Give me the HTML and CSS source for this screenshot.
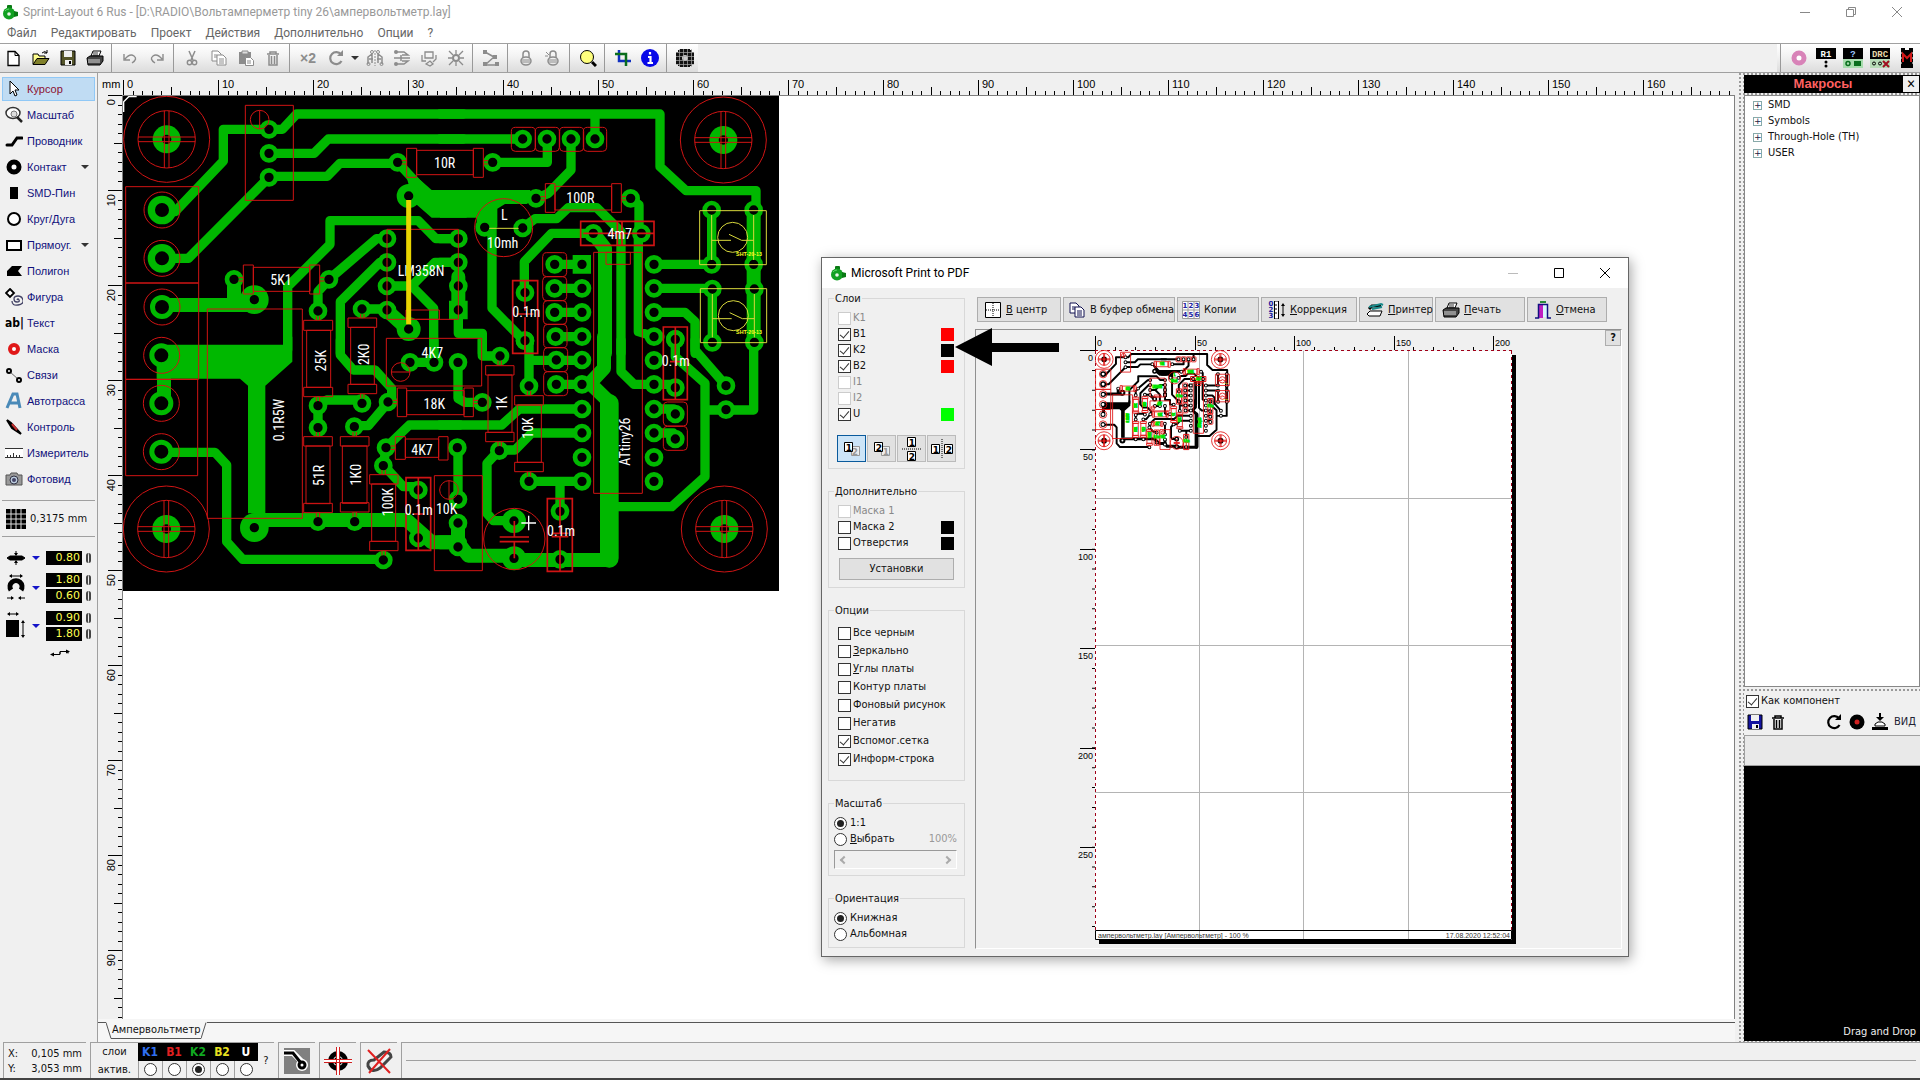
FILE: index.html
```html
<!DOCTYPE html>
<html lang="ru">
<head>
<meta charset="utf-8">
<title>Sprint-Layout 6 Rus</title>
<link rel="stylesheet" href="styles.css">
</head>
<body>

<svg class="defs" width="0" height="0" aria-hidden="true">
  <defs>
    <symbol id="logo" viewBox="0 0 16 16"><rect x="5" y="1" width="5" height="4" rx="1" fill="#0a7a14"/><circle cx="7" cy="9.500" r="6" fill="#12a022"/><path d="M12 7l4 1v4l-4 1z" fill="#0a7a14"/><circle cx="7" cy="10" r="1.800" fill="#eaf6ea"/><path d="M3 7a5 5 0 0 1 4-2" stroke="#5fd86a" fill="none"/></symbol>
    <symbol id="printer" viewBox="0 0 18 18"><path d="M5 7l2-5h8l-2 5z" fill="#fff" stroke="#000"/><path d="M7 4h5M7 6h5" stroke="#000" stroke-width=".8"/><path d="M1 9l3-2h13v5l-3 4H2z" fill="#444" stroke="#000"/><path d="M2 11h12M2 13h12" stroke="#ddd"/></symbol>
    <symbol id="floppy" viewBox="0 0 18 18"><path d="M2 2h14v14H2z" fill="var(--disk,#55552a)" stroke="#000"/><path d="M5 2h8v6H5zM6 11h7v5H6z" fill="#f0f0f0"/><path d="M10 12h2v3h-2z" fill="#000"/></symbol>
    <symbol id="trash" viewBox="0 0 18 18"><path d="M3 5h12M6 5V3h6v2M5 6v10h8V6M7.500 7v8M10.500 7v8" fill="none" stroke="currentColor" stroke-width="1.500"/></symbol>
    <symbol id="pages" viewBox="0 0 18 18"><path d="M2 2h6l3 3v7H2z" fill="#fff" stroke="currentColor"/><path d="M7 6h6l3 3v7H7z" fill="#fff" stroke="currentColor"/><path d="M4 6h3M4 8h3M9 10h5M9 12h5M9 14h5" stroke="currentColor"/></symbol>
    <symbol id="turn" viewBox="0 0 18 18"><path d="M14 5.500A6 6 0 1 0 14.500 12" fill="none" stroke="currentColor" stroke-width="2.200"/><path d="M10 7h6V1z" fill="currentColor"/></symbol>
    <symbol id="lock" viewBox="0 0 18 18"><path d="M6 9V5q0-3 3-3t3 3v4" fill="none" stroke="currentColor" stroke-width="1.500"/><ellipse cx="9" cy="12" rx="5" ry="4" fill="none" stroke="currentColor" stroke-width="1.500"/><path d="M5 11h8M5 13h8" stroke="currentColor"/></symbol>
    <g id="mount"><circle r="42" class="copper"/><circle r="14" class="hole"/><g class="silk"><circle r="129"/><circle r="86"/><path d="M-86 -7H86M-86 7H86M-7 -86V86M7 -86V86"/></g></g>
    <pattern id="ticks-x" x="25" width="95" height="22" patternUnits="userSpaceOnUse"><path d="M.5 7v15M10.500 18v4M19.500 18v4M29.500 18v4M38.500 18v4M48.500 14v8M57.500 18v4M67.500 18v4M76.500 18v4M86.500 18v4" stroke="#000"/></pattern>
    <pattern id="ticks-y" y="0" width="24" height="95" patternUnits="userSpaceOnUse"><path d="M10 .5h14M20 10.500h4M20 19.500h4M20 29.500h4M20 38.500h4M16 48.500h8M20 57.500h4M20 67.500h4M20 76.500h4M20 86.500h4" stroke="#000"/></pattern>

    <g id="board">
      <!-- copper -->
      <g class="track">
        <g transform="translate(360 270)">
          <path d="M165 365L310 213V118H487L530 72H1030M447 190H582L625 147H1030M447 259H622L660 220H833M128 505H205L447 262M503 780V590L630 463V392H895L948 446H1015M627 568L770 446H801M661 790V635L780 517H801M726 657H801M801 588H875L941 655V780M875 588L945 517H1015M594 660V605L627 568M833 217L900 290"/>
          <path class="w42" d="M342 590V640M125 645H403M808 668L860 715"/>
          <path class="copper" d="M850 225L935 300H1040V383H935L880 335Z"/>
          <path class="w56" d="M447 118h0M447 190h0M447 262h0M833 217h0M342 568h0M627 568h0M594 663h0M726 657h0M801 446h0M801 517h0M801 588h0M801 660h0M1015 446h0M1015 517h0M1015 588h0M866 318h0M866 717h0"/>
          <path class="w70" d="M866 318h0M866 717h0M126 651h0"/>
          <path class="w86" d="M403 629h0M126 360h0M126 505h0"/>
        </g>
        <g transform="translate(1320 270)">
          <path d="M0 72H660V230L738 302H948V360M465 72V147M0 147H248M158 217H322V147M393 147V240L325 310L288 325M156 383V655L255 755M248 414L285 386H350L385 353H470L543 425V790M460 430H335L253 515V608M572 325L597 345V430M604 430L595 445V725L642 740M344 523H426M344 595H426M344 667H426M344 740H426M642 523H815M642 595H817M642 667H735L765 695V790M815 360V523M817 597V757M0 446H55M0 517H55M55 660V730H127V790M642 740H660"/>
          <path class="w42" d="M460 430L495 475V790M941 360V757M55 560V660"/>
          <path class="copper" d="M0 300H270L288 325L260 342H195L172 356V412H110V383H0ZM398 495H453V551H398ZM27 632H83V688H27Z"/>
          <path class="w56" d="M248 147h0M321 147h0M393 147h0M465 147h0M158 217h0M288 325h0M572 325h0M134 412h0M248 414h0M460 430h0M604 430h0M255 608h0M255 752h0M344 523h0M344 595h0M344 667h0M347 740h0M426 595h0M426 667h0M426 740h0M642 523h0M642 595h0M642 667h0M642 740h0M706 748h0M815 360h0M941 360h0M815 523h0M941 523h0M817 597h0M943 597h0M817 757h0M943 757h0"/>
        </g>
        <g transform="translate(360 1020)">
          <path d="M661 0V45L700 90H765L815 145V175L745 257H703M870 67H942V0M594 195V263M594 195L620 180H726M798 323L868 255H1020M790 375L850 440H895M798 323L790 377M124 337H285L320 375V605L368 658H790"/>
          <path class="w42" d="M132 46V190M403 540H860L935 607H1020"/>
          <path class="copper" d="M110 14H489V-10H517V65L436 137V520H384V137L360 116H110Z"/>
          <path class="w56" d="M804 186h0M703 260h0M870 67h0M942 67h0M594 197h0M594 263h0M726 190h0M594 545h0M704 545h0M895 450h0M895 594h0M798 323h0M790 377h0M790 660h0"/>
          <path class="w70" d="M124 46h0M124 190h0M124 335h0"/>
          <path class="w86" d="M403 563h0"/>
        </g>
        <g transform="translate(1320 1020)">
          <path d="M127 0V48H180M54 67V175L75 187H127M267 10V138M267 61H426M349 133H426M543 0V95L582 133H706M706 0V50L795 130V410L695 500H530M765 0V30L858 137M795 210H941V0M642 207H700M642 279H700M0 255H185L238 207H426M426 279H275L225 330H178L141 370V520L160 542H222M267 424H426M360 424V512M54 323V478"/>
          <path class="w42" d="M492 -10V85L450 130L507 185V660H222M54 549V621M0 607H54L85 647H222"/>
          <path class="w56" d="M508 190V655M180 48h0M54 67h0M127 187h0M255 2h0M267 138h0M349 60h0M426 60h0M349 133h0M426 133h0M426 207h0M426 279h0M426 352h0M426 424h0M642 61h0M642 133h0M642 207h0M642 279h0M642 352h0M642 424h0M706 -2h0M706 143h0M858 137h0M858 209h0M706 222h0M706 297h0M178 332h0M360 514h0M360 658h0M267 424h0M52 323h0M54 478h0M54 549h0M54 621h0"/>
          <path class="w70" d="M222 543h0M222 655h0"/>
        </g>
      </g>
      <!-- drilled holes -->
      <g class="drill">
        <path transform="translate(360 270)" d="M447 118h0M447 190h0M447 262h0M833 217h0M342 568h0M627 568h0M594 663h0M726 657h0M801 446h0M801 517h0M801 588h0M801 660h0M1015 446h0M1015 517h0M1015 588h0M1015 660h0M866 318h0M866 717h0M403 629h0"/>
        <path transform="translate(1320 270)" d="M248 147h0M321 147h0M393 147h0M465 147h0M158 217h0M288 325h0M572 325h0M134 412h0M248 414h0M460 430h0M604 430h0M255 608h0M255 752h0M344 523h0M344 595h0M344 667h0M347 740h0M426 523h0M426 595h0M426 667h0M426 740h0M642 523h0M642 595h0M642 667h0M642 740h0M706 748h0M815 360h0M941 360h0M815 523h0M941 523h0M817 597h0M943 597h0M817 757h0M943 757h0"/>
        <path transform="translate(360 1020)" d="M804 186h0M703 260h0M870 67h0M942 67h0M594 197h0M594 263h0M726 190h0M594 545h0M704 545h0M895 450h0M895 594h0M798 323h0M790 377h0M790 660h0M403 563h0"/>
        <path transform="translate(1320 1020)" d="M180 48h0M54 67h0M127 187h0M267 138h0M349 60h0M426 60h0M349 133h0M426 133h0M426 207h0M426 279h0M426 352h0M426 424h0M642 61h0M642 133h0M642 207h0M642 279h0M642 352h0M642 424h0M706 143h0M858 137h0M858 209h0M706 222h0M706 297h0M178 332h0M360 514h0M360 658h0M267 424h0M52 323h0M54 478h0M54 549h0M54 621h0M222 543h0M222 655h0"/>
        <path class="wide" transform="translate(360 270)" d="M126 360h0M126 505h0M126 651h0M124 796h0M124 940h0M124 1085h0"/>
      </g>
      <use href="#mount" x="500" y="418"/><use href="#mount" x="2170" y="420"/><use href="#mount" x="499" y="1587"/><use href="#mount" x="2173" y="1587"/>
      <!-- silkscreen -->
      <g class="silk">
        <g transform="translate(360 270)">
          <path d="M376 46h144v285h-144zM419 61v56M17 290H236V579H17ZM17 579H236V868H17ZM17 868H233V1157H17ZM262 657H547V1285H262ZM860 175h30v87h-30zM890 181h170v73h-170zM1060 175h30v87h-30zM845 212h15M845 222h15M370 525h30v87h-30zM400 532h170v72h-170zM569 525h30v87h-30zM356 563h14M356 573h14M599 563h14M599 573h14M801 418h214v270h-214zM858 660h100v28h-100zM799 745h286v143h-286zM551 691h87v30h-87zM560 721h72v171h-72zM551 892h87v28h-87zM684 684h86v28h-86zM692 712h71v171h-71zM684 883h86v28h-86zM589 678v13M599 678v13M722 672v12M732 672v12"/>
          <circle cx="419" cy="89" r="28"/><circle cx="126" cy="360" r="54"/><circle cx="126" cy="505" r="54"/><circle cx="126" cy="651" r="54"/><circle cx="125" cy="796" r="54"/><circle cx="124" cy="940" r="54"/><circle cx="124" cy="1085" r="54"/>
        </g>
        <g transform="translate(1320 270)">
          <path d="M130 212h14M130 222h14M302 320h14M302 330h14M544 320h14M544 330h14M316 281h29v86h-29zM345 289h170v71h-170zM515 281h29v86h-29zM461 487h146v723h-146zM498 487h73v36h-73z"/>
          <path class="bold" d="M422 394h220v72h-220zM430 430h212M532 394v72M546 394v72M218 572h75v218h-75zM255 572v90M255 682v108M230 672h50M670 711h72v218h-72zM706 711v218M690 815h36"/>
          <rect x="214" y="112" width="72" height="72" rx="12"/><rect x="286" y="112" width="72" height="72" rx="12"/><rect x="359" y="112" width="72" height="72" rx="12"/><rect x="430" y="112" width="70" height="72" rx="12"/>
          <rect x="308" y="488" width="72" height="72" rx="12"/><rect x="308" y="560" width="72" height="72" rx="12"/><rect x="310" y="632" width="70" height="71" rx="12"/><rect x="311" y="703" width="70" height="70" rx="12"/><rect x="311" y="773" width="72" height="72" rx="12"/><rect x="311" y="845" width="72" height="72" rx="12"/><rect x="670" y="936" width="72" height="72" rx="12"/><rect x="670" y="1009" width="72" height="72" rx="12"/>
          <circle cx="191" cy="413" r="87"/>
        </g>
        <g transform="translate(360 1020)">
          <path d="M551 290h86v28h-86zM558 318h72v173h-72zM551 490h86v28h-86zM661 290h86v28h-86zM667 318h74v172h-74zM661 488h86v28h-86zM832 144h28v86h-28zM860 152h172v72h-172zM818 181h14M818 191h14M826 290h30v68h-30zM856 297h100v55h-100zM956 290h28v70h-28zM749 404h85v28h-85zM755 432h72v172h-72zM749 604h85v28h-85zM943 407h144v285h-144zM987 422v56M814 96h56M589 170v14M599 170v14M722 161v14M732 161v14M589 276v14M599 276v14M699 276v14M709 276v14M589 518v14M599 518v14M699 516v14M709 516v14M786 390v14M796 390v14M786 632v14M796 632v14M812 318h14M812 328h14"/>
          <path class="bold" d="M858 413h74v218h-74zM895 413v218M878 522h36"/>
          <circle cx="842" cy="96" r="28"/><circle cx="987" cy="450" r="28"/>
        </g>
        <g transform="translate(1320 1020)">
          <path d="M72 144h28v86h-28zM100 181h14M100 191h14M137 77h85v28h-85zM144 105h72v172h-72zM137 277h85v28h-85zM174 62v15M184 62v15M174 305v14M184 305v14M224 167h86v28h-86zM232 195h72v172h-72zM224 367h86v28h-86zM262 153v14M272 153v14M262 395v14M272 395v14"/>
          <path class="bold" d="M179 591h88M179 605h88M223 543v48M223 605v50"/>
          <path class="bold" d="M322 476h75v218h-75zM360 476v104M360 590v104M335 580h50M335 590h50"/>
          <circle cx="223" cy="597" r="92"/>
        </g>
      </g>
      <g class="under" transform="translate(1320 270)">
        <path d="M779 362h200v162h-200zM781 596h199v162h-199zM815 375v135M941 375v135M817 612v130M943 612v130M815 451h58M905 451h36M867 433l38 18M817 686h58M907 686h36M869 668l38 18M148 415h88"/>
        <circle cx="878" cy="442" r="45"/><circle cx="880" cy="677" r="45"/>
        <text x="927" y="498">SHT-20-13</text><text x="927" y="732">SHT-20-13</text>
      </g>
      <g class="names">
        <g transform="translate(360 270)"><text x="974" y="233">10R</text><text x="483" y="584">5K1</text><text x="903" y="559">LM358N</text></g>
        <g transform="translate(1320 270)"><text x="421" y="340">100R</text><text x="193" y="389">L</text><text x="188" y="475">10mh</text><text x="539" y="448">4m7</text><text x="259" y="682">0.1m</text></g>
        <g transform="translate(360 1020)"><text x="937" y="54">4K7</text><text x="943" y="207">18K</text><text x="906" y="344">4K7</text><text x="896" y="526">0.1m</text><text x="980" y="523">10K</text>
          <text transform="translate(617 62) rotate(-90)">25K</text><text transform="translate(747 43) rotate(-90)">2K0</text><text transform="translate(492 240) rotate(-90)">0.1R5W</text><text transform="translate(612 406) rotate(-90)">51R</text><text transform="translate(722 404) rotate(-90)">1K0</text><text transform="translate(819 486) rotate(-90)">100K</text></g>
        <g transform="translate(1320 1020)"><text x="707" y="79">0.1m</text><text x="363" y="587">0.1m</text>
          <text transform="translate(202 190) rotate(-90)">1K</text><text transform="translate(280 264) rotate(-90)">10K</text><text transform="translate(570 305) rotate(-90)">ATtiny26</text></g>
      </g>
    </g>
  </defs>
</svg>

<header class="titlebar">
  <svg class="i16"><use href="#logo"/></svg>
  <span class="caption">Sprint-Layout 6 Rus - [D:\RADIO\Вольтамперметр tiny 26\ампервольтметр.lay]</span>
  <div class="winbtns">
    <button aria-label="Свернуть"><svg width="12" height="12"><path d="M1 6.500h10" stroke="#888"/></svg></button>
    <button aria-label="Восстановить"><svg width="12" height="12"><path d="M1.500 3.500h7v7h-7zM3.500 3V1.500h7v7H9" fill="none" stroke="#888"/></svg></button>
    <button aria-label="Закрыть"><svg width="12" height="12"><path d="M1 1l10 10M11 1L1 11" stroke="#888"/></svg></button>
  </div>
</header>
<nav class="menubar">
  <a href="#">Файл</a><a href="#">Редактировать</a><a href="#">Проект</a><a href="#">Действия</a><a href="#">Дополнительно</a><a href="#">Опции</a><a href="#">?</a>
</nav>

<div class="toolbar">
  <div class="bargroup">
    <button aria-label="Новый"><svg viewBox="0 0 18 18"><path d="M3 2.500h7l4 4v10H3z" fill="#fff" stroke="#000" stroke-width="1.300"/><path d="M10 2.500v4h4" fill="none" stroke="#000"/></svg></button>
    <button aria-label="Открыть"><svg viewBox="0 0 18 18"><path d="M1 15V5h5l1 2h6v2" fill="#ffff90" stroke="#000"/><path d="M1 15.500l4-6h12l-4 6z" fill="#80802a" stroke="#000"/><path d="M10 4q3-3 5 0m0-3v3h-3" fill="none" stroke="#000"/></svg></button>
    <button aria-label="Сохранить"><svg viewBox="0 0 18 18"><use href="#floppy"/></svg></button>
    <button aria-label="Печать"><svg viewBox="0 0 18 18"><use href="#printer"/></svg></button>
    <i class="sep"></i>
    <button class="dim" aria-label="Отменить"><svg viewBox="0 0 18 18"><path d="M3 5v6h6M4 10q5-6 9-3t-2 7" fill="none" stroke="currentColor" stroke-width="1.400"/></svg></button>
    <button class="dim" aria-label="Повторить"><svg viewBox="0 0 18 18"><path d="M15 5v6H9M14 10q-5-6-9-3t2 7" fill="none" stroke="currentColor" stroke-width="1.400"/></svg></button>
    <i class="sep"></i>
    <button class="dim" aria-label="Вырезать"><svg viewBox="0 0 18 18"><path d="M6 2l4 9M12 2L8 11" stroke="currentColor" stroke-width="1.500"/><circle cx="6.500" cy="13.500" r="2.200" fill="none" stroke="currentColor" stroke-width="1.400"/><circle cx="11.500" cy="13.500" r="2.200" fill="none" stroke="currentColor" stroke-width="1.400"/></svg></button>
    <button class="dim" aria-label="Копировать"><svg viewBox="0 0 18 18"><use href="#pages"/></svg></button>
    <button class="dim" aria-label="Вставить"><svg viewBox="0 0 18 18"><path d="M2 3h12v12H2z" fill="currentColor"/><path d="M5 2h6v3H5z" fill="#ddd" stroke="currentColor"/><path d="M8.500 8.500h5l3 3v5h-8z" fill="#fff" stroke="currentColor"/><path d="M10 12h4M10 14h4" stroke="currentColor"/></svg></button>
    <button class="dim" aria-label="Удалить"><svg viewBox="0 0 18 18"><use href="#trash"/></svg></button>
    <i class="sep"></i>
    <button class="dim x2">×2</button>
    <button class="dim" aria-label="Повернуть"><svg viewBox="0 0 18 18"><use href="#turn"/></svg></button>
    <button class="drop" aria-label="Угол поворота"><i class="caret"></i></button>
    <button class="dim" aria-label="Отразить по горизонтали"><svg viewBox="0 0 18 18"><path d="M9 1v16" stroke="currentColor" stroke-dasharray="2 1"/><path d="M2 15V8l4-3v9M16 15V8l-4-3v9M3 10h4M11 10h4" fill="none" stroke="currentColor" stroke-width="1.500"/><circle cx="2.500" cy="15" r="1.500" fill="none" stroke="currentColor"/><circle cx="15.500" cy="15" r="1.500" fill="none" stroke="currentColor"/><circle cx="6" cy="3" r="1.500" fill="none" stroke="currentColor"/><circle cx="12" cy="3" r="1.500" fill="none" stroke="currentColor"/></svg></button>
    <button class="dim" aria-label="Отразить по вертикали"><svg viewBox="0 0 18 18"><path d="M1 9h16" stroke="currentColor" stroke-width="1.500"/><path d="M2 3h9l4 3H9M2 15h9l4-3H9M8 6v6" fill="none" stroke="currentColor" stroke-width="1.500"/><circle cx="3" cy="3" r="2" fill="currentColor"/><circle cx="3" cy="15" r="2" fill="currentColor"/></svg></button>
    <button class="dim" aria-label="Выровнять"><svg viewBox="0 0 18 18"><path d="M5 3h8v6H5zM2 6v6h4M16 6v4l-3 3M6 15l4-3 3 3-3 2z" fill="none" stroke="currentColor" stroke-width="1.300"/></svg></button>
    <button class="dim" aria-label="К сетке"><svg viewBox="0 0 18 18"><circle cx="9" cy="9" r="3" fill="none" stroke="currentColor" stroke-width="2"/><path d="M9 1v4M9 13v4M1 9h4M13 9h4M2 2l4 4M16 2l-4 4M2 16l4-4M16 16l-4-4" stroke="currentColor" stroke-width="1.300"/></svg></button>
    <i class="sep"></i>
    <button class="dim" aria-label="Связать"><svg viewBox="0 0 18 18"><path d="M3 3l9 5-9 8h11" fill="none" stroke="currentColor" stroke-width="1.500"/><path d="M1 1h4v4H1zM1 13h4v4H1zM13 13h4v4h-4zM11 6h4v4h-4z" fill="currentColor"/></svg></button>
    <i class="sep"></i>
    <button class="dim" aria-label="Группировать"><svg viewBox="0 0 18 18"><use href="#lock"/></svg></button>
    <button class="dim" aria-label="Разгруппировать"><svg viewBox="0 0 18 18"><use href="#lock"/><path d="M2 3l3 3M1 7h3" stroke="currentColor"/></svg></button>
    <i class="sep"></i>
    <button aria-label="Лупа"><svg viewBox="0 0 18 18"><circle cx="8" cy="8" r="6.500" fill="#ffff7d" stroke="#000"/><path d="M13 13l4 4" stroke="#000" stroke-width="3"/></svg></button>
    <i class="sep"></i>
    <button aria-label="Шаблон"><svg viewBox="0 0 18 18"><path d="M5 1v11h12" fill="none" stroke="#1030c0" stroke-width="2.500"/><path d="M1 5h11v12" fill="none" stroke="#0a6e1e" stroke-width="2.500"/></svg></button>
    <button aria-label="Информация"><svg viewBox="0 0 18 18"><circle cx="9" cy="9" r="9" fill="#0808e8"/><path d="M9 3v2.500M7 8h2.500v6M6.500 14h5.500" stroke="#fff" stroke-width="2.200" fill="none"/></svg></button>
    <i class="sep"></i>
    <button aria-label="Просмотр"><svg viewBox="0 0 18 18"><path d="M4 0h10v1h2v2h2v12h-2v2h-2v1H4v-1H2v-2H0V3h2V1h2z" fill="#111"/><circle cx="9" cy="9" r="3" fill="#ccc"/><path d="M0 3.500h18M0 7.500h18M0 11.500h18M0 15.500h18M3.500 0v18M7.500 0v18M11.500 0v18M15.500 0v18" stroke="#aaa" stroke-width=".7"/></svg></button>
  </div>
  <div class="bargroup macrotools">
    <i class="sep"></i>
    <button aria-label="Фотовид"><svg viewBox="0 0 20 20"><circle cx="10" cy="10" r="5" fill="#fff" stroke="#d883b8" stroke-width="5"/></svg></button>
    <button aria-label="Список компонентов"><svg viewBox="0 0 20 20"><path d="M0 0h20v11H0z"/><text x="10" y="9" class="badge" fill="#fff">R1</text><circle cx="10" cy="14" r="1.500"/><circle cx="10" cy="18" r="1.500"/></svg></button>
    <button aria-label="Свойства"><svg viewBox="0 0 20 20"><path d="M0 0h20v11H0z"/><path d="M0 11h20v9H0z" fill="#a8dcae"/><text x="10" y="9" class="badge" fill="#9cc8ff">?</text><circle cx="5" cy="15.500" r="2" fill="none" stroke="#0a6e1e" stroke-width="1.500"/><path d="M11 13h7v5h-7z" fill="#0a6e1e"/></svg></button>
    <button aria-label="Контроль DRC"><svg viewBox="0 0 20 20"><path d="M0 0h20v11H0z"/><path d="M0 11h20v9H0z" fill="#b8dcb8"/><text x="10" y="9" class="badge" fill="#e8d8a8">DRC</text><circle cx="4" cy="15.500" r="1.500" fill="none" stroke="#000"/><circle cx="10" cy="15.500" r="1.500" fill="none" stroke="#000"/><path d="M13 13l6 6M19 13l-6 6" stroke="#a01020" stroke-width="2"/></svg></button>
    <button aria-label="Макросы"><svg viewBox="0 0 20 20"><path d="M4 0h12v20H4z"/><path d="M8 0h4v2H8z" fill="#fff"/><path d="M6 14V6l4 4 4-4v8" fill="none" stroke="#d01818" stroke-width="2"/><path d="M4 5h1M4 10h1M4 15h1M15 5h1M15 10h1M15 15h1" stroke="#fff"/></svg></button>
  </div>
</div>

<main class="body">
  <aside class="tools">
    <div class="toollist">
      <button class="on"><svg viewBox="0 0 18 18"><path d="M5 1v13l3-3 2 5 2-1-2-5h4z" fill="#fff" stroke="#000"/></svg>Курсор</button>
      <button><svg viewBox="0 0 18 18"><ellipse cx="8" cy="7" rx="7" ry="5.500" fill="#fff" stroke="#333" stroke-width="1.500"/><circle cx="9" cy="8" r="3" fill="#ddd" stroke="#777"/><path d="M12 11l5 5" stroke="#222" stroke-width="2.500"/></svg>Масштаб</button>
      <button><svg viewBox="0 0 18 18"><path d="M2 13h5l5-7h5" fill="none" stroke="#000" stroke-width="3" stroke-linecap="round"/></svg>Проводник</button>
      <button><svg viewBox="0 0 18 18"><circle cx="9" cy="9" r="5" fill="#fff" stroke="#000" stroke-width="5"/></svg>Контакт<i class="caret"></i></button>
      <button><svg viewBox="0 0 18 18"><path d="M5 3h8v12H5z"/></svg>SMD-Пин</button>
      <button><svg viewBox="0 0 18 18"><circle cx="9" cy="9" r="6" fill="#fff" stroke="#000" stroke-width="2"/></svg>Круг/Дуга</button>
      <button><svg viewBox="0 0 18 18"><path d="M2 5h14v9H2z" fill="#fff" stroke="#000" stroke-width="2"/></svg>Прямоуг.<i class="caret"></i></button>
      <button><svg viewBox="0 0 18 18"><path d="M7 4h10l-4 5 4 5H2V9z"/></svg>Полигон</button>
      <button><svg viewBox="0 0 18 18"><path d="M5 1l4 4-4 4-4-4z" fill="#fff" stroke="#000" stroke-width="1.800"/><path d="M12 12q1-2 2 0t-2 2-3-3 4-3 5 4-5 5-6-4" fill="none" stroke="#446" stroke-width="1.300"/></svg>Фигура</button>
      <button><span class="abl">ab|</span>Текст</button>
      <button><svg viewBox="0 0 18 18"><circle cx="9" cy="9" r="4" fill="#fff" stroke="#e01818" stroke-width="4"/></svg>Маска</button>
      <button><svg viewBox="0 0 18 18"><path d="M4 5l10 9" stroke="#666"/><circle cx="4" cy="5" r="2" fill="#fff" stroke="#000" stroke-width="2"/><circle cx="14" cy="14" r="2" fill="#fff" stroke="#000" stroke-width="2"/></svg>Связи</button>
      <button><svg viewBox="0 0 18 18"><path d="M2 16L8 2h4l3 14M5 11h8" fill="none" stroke="#4a8ab8" stroke-width="3"/></svg>Автотрасса</button>
      <button><svg viewBox="0 0 18 18"><path d="M2 2l4 3 10 11-9-6z" stroke="#000" stroke-width="2"/><path d="M7 6l5 6" stroke="#c03030" stroke-width="2"/></svg>Контроль</button>
      <button><svg viewBox="0 0 18 18"><path d="M0 4h18v10H0z" fill="#fff"/><path d="M0 4.500h18M0 13.500h18M2.500 14v-3M5.500 14v-3M8.500 14v-5M11.500 14v-3M14.500 14v-3" stroke="#333"/></svg>Измеритель</button>
      <button><svg viewBox="0 0 18 18"><path d="M1 5h4l1-2h6l1 2h4v10H1z" fill="#999" stroke="#555"/><circle cx="9" cy="10" r="4" fill="#bcd" stroke="#334"/><circle cx="9" cy="10" r="2" fill="#446"/></svg>Фотовид</button>
    </div>
    <button class="grid"><svg viewBox="0 0 20 20"><path d="M0 0h20v20H0z"/><path d="M0 5h20M0 10h20M0 15h20M5 0v20M10 0v20M15 0v20" stroke="#ddd"/></svg>0,3175 mm</button>
    <div class="sizes">
      <div class="size"><svg width="20" height="14"><path d="M1 7l3-2h12l3 2-3 2H4z" stroke="#000"/><path d="M10 0v4M10 10v4" stroke="#000"/><path d="M8 2h4l-2 3zM8 12h4l-2-3z"/></svg><i class="caret blue"></i><div><input aria-label="Ширина дорожки" value="0.80"></div><div class="spin"><i></i></div></div>
      <div class="size"><svg width="20" height="30"><path d="M5 17a6 6 0 1 1 10 0" fill="none" stroke="#000" stroke-width="5"/><path d="M4 3h12M1 25h6M13 25h6" stroke="#000"/><path d="M3 3l3-2v4zM17 3l-3-2v4zM8 25l-3-2v4zM12 25l3-2v4z"/></svg><i class="caret blue"></i><div><input aria-label="Диаметр контакта" value="1.80"><input aria-label="Диаметр отверстия" value="0.60"></div><div class="spin"><i></i><i></i></div></div>
      <div class="size"><svg width="20" height="30"><path d="M0 9h13v17H0z"/><path d="M2 3h10M17 11v14" stroke="#000"/><path d="M1 3l3-2v4zM13 3l-3-2v4zM17 9l-2 3h4zM17 27l-2-3h4z"/></svg><i class="caret blue"></i><div><input aria-label="Ширина SMD" value="0.90"><input aria-label="Высота SMD" value="1.80"></div><div class="spin"><i></i><i></i></div></div>
      <button class="swap" aria-label="Поменять местами"><svg width="20" height="8"><path d="M2 5.500h8V3M10 5V2.500h8v2" fill="none" stroke="#000"/><path d="M0 5.500l4-2v4zM20 2.500l-4-2v4z"/></svg></button>
    </div>
  </aside>

  <section class="work">
    <svg class="ruler-x">
      <text x="4" y="15">mm</text>
      <rect x="25" width="100%" height="22" fill="url(#ticks-x)"/>
      <text x="29" y="15">0</text><text x="124" y="15">10</text><text x="219" y="15">20</text><text x="314" y="15">30</text><text x="409" y="15">40</text><text x="504" y="15">50</text><text x="599" y="15">60</text><text x="694" y="15">70</text><text x="789" y="15">80</text><text x="884" y="15">90</text><text x="979" y="15">100</text><text x="1074" y="15">110</text><text x="1169" y="15">120</text><text x="1264" y="15">130</text><text x="1359" y="15">140</text><text x="1454" y="15">150</text><text x="1549" y="15">160</text>
    </svg>
    <div class="stage">
      <svg class="ruler-y">
        <rect width="24" height="100%" fill="url(#ticks-y)"/>
        <g text-anchor="end"><text transform="translate(17 4) rotate(-90)">0</text><text transform="translate(17 99) rotate(-90)">10</text><text transform="translate(17 194) rotate(-90)">20</text><text transform="translate(17 289) rotate(-90)">30</text><text transform="translate(17 384) rotate(-90)">40</text><text transform="translate(17 479) rotate(-90)">50</text><text transform="translate(17 574) rotate(-90)">60</text><text transform="translate(17 669) rotate(-90)">70</text><text transform="translate(17 764) rotate(-90)">80</text><text transform="translate(17 859) rotate(-90)">90</text></g>
      </svg>
      <div class="canvas">
        <svg class="pcb" width="656" height="495" viewBox="369 288 1968 1485">
          <rect x="369" y="288" width="1968" height="1485"/>
          <use href="#board"/>
          <path d="M1226 600V973" stroke="#e8d400" stroke-width="15"/>
          <path d="M1564 1569h44M1586 1547v44" stroke="#fff" stroke-width="4"/>
          <path d="M371 336V305L386 290H410" stroke="#fff" stroke-width="4" fill="none"/>
        </svg>
      </div>
    </div>
    <div class="tabs"><i class="lead"></i><svg width="6" height="17"><path d="M0 .5l5 16H6" fill="none" stroke="#555"/></svg><button>Ампервольтметр</button><svg width="6" height="17"><path d="M0 16.500L5 .5" fill="none" stroke="#555"/></svg><i class="rest"></i></div>
  </section>

  <aside class="macros">
    <header><h2>Макросы</h2><button aria-label="Закрыть">✕</button></header>
    <ul class="tree">
      <li><button>+</button>SMD</li><li><button>+</button>Symbols</li><li><button>+</button>Through-Hole (TH)</li><li><button>+</button>USER</li>
    </ul>
    <div class="macrobar">
      <label><input type="checkbox" checked>Как компонент</label>
      <div class="icons">
        <button aria-label="Сохранить макрос"><svg class="navy" viewBox="0 0 18 18"><use href="#floppy"/></svg></button>
        <button aria-label="Удалить макрос"><svg viewBox="0 0 18 18"><use href="#trash"/></svg></button>
        <i class="gap"></i>
        <button aria-label="Повернуть"><svg viewBox="0 0 18 18"><use href="#turn"/></svg></button>
        <button aria-label="Слой"><svg viewBox="0 0 18 18"><circle cx="9" cy="9" r="7.500"/><circle cx="9" cy="9" r="2.500" fill="#d02020"/></svg></button>
        <button aria-label="Сторона"><svg viewBox="0 0 18 18"><path d="M1 14h16v3H1z"/><path d="M5 4h8l-4 4z"/><path d="M4 13v-2l3-2h4l3 2v2z" fill="#fff" stroke="#000"/><path d="M9 0v5" stroke="#000" stroke-width="2"/></svg></button>
        <button class="view">ВИД</button>
      </div>
    </div>
    <div class="nameplate"></div>
    <div class="macroview">Drag and Drop</div>
  </aside>
</main>

<footer class="status">
  <dl class="coords"><dt>X:</dt><dd>0,105 mm</dd><dt>Y:</dt><dd>3,053 mm</dd></dl>
  <div class="layerbox">
    <table>
      <tr class="names-row"><th scope="row">слои</th><td class="k1">K1</td><td class="b1">B1</td><td class="k2">K2</td><td class="b2">B2</td><td class="u">U</td></tr>
      <tr><th scope="row">актив.</th><td><input type="radio" name="layer" aria-label="K1"></td><td><input type="radio" name="layer" aria-label="B1"></td><td><input type="radio" name="layer" aria-label="K2" checked></td><td><input type="radio" name="layer" aria-label="B2"></td><td><input type="radio" name="layer" aria-label="U"></td></tr>
    </table>
    <button>?</button>
  </div>
  <button class="big" aria-label="Захват"><svg width="26" height="26"><path d="M0 0h26v26H0z" fill="#808080"/><path d="M0 5h9l9 9" fill="none" stroke="#fff" stroke-width="6"/><circle cx="18" cy="17" r="6" fill="#fff"/><path d="M0 5h9l8 10" fill="none" stroke="#000" stroke-width="3"/><circle cx="18" cy="17" r="3" fill="#fff" stroke="#000" stroke-width="3"/></svg></button>
  <button class="big" aria-label="Перекрестие"><svg width="28" height="28"><circle cx="14" cy="14" r="10"/><circle cx="14" cy="14" r="5" fill="#fff"/><circle cx="14" cy="14" r="4"/><path d="M14 0v28M0 14h28" stroke="#fff" stroke-width="2"/><path d="M12.500 0v28M15.500 0v28M0 12.500h28M0 15.500h28" stroke="#d02020"/></svg></button>
  <button class="big" aria-label="Замыкание"><svg width="28" height="28"><path d="M3 19q-1-6 6-6l10-8q7 0 7 5L15 21q-8 6-12-2z" fill="none" stroke="#444" stroke-width="3"/><path d="M3 3l22 23M25 2L4 26" stroke="#e02020" stroke-width="2"/></svg></button>
  <div class="message"><hr></div>
</footer>

<section class="dialog" role="dialog" aria-label="Microsoft Print to PDF">
  <header>
    <svg class="i16"><use href="#logo"/></svg><h1>Microsoft Print to PDF</h1>
    <div class="winbtns">
      <button aria-label="Свернуть"><svg width="12" height="12"><path d="M1 6.500h10" stroke="#bbb"/></svg></button>
      <button aria-label="Развернуть"><svg width="12" height="12"><path d="M1.500 1.500h9v9h-9z" fill="none" stroke="#000"/></svg></button>
      <button aria-label="Закрыть"><svg width="12" height="12"><path d="M1 1l10 10M11 1L1 11" stroke="#000"/></svg></button>
    </div>
  </header>
  <div class="dlgbody">
    <form class="settings">
      <fieldset class="layers"><legend>Слои</legend>
        <div class="row"><label class="off"><input type="checkbox" disabled>K1</label></div>
        <div class="row"><label><input type="checkbox" checked>B1</label><i class="swatch red"></i></div>
        <div class="row"><label><input type="checkbox" checked>K2</label><i class="swatch"></i></div>
        <div class="row"><label><input type="checkbox" checked>B2</label><i class="swatch red"></i></div>
        <div class="row"><label class="off"><input type="checkbox" disabled>I1</label></div>
        <div class="row"><label class="off"><input type="checkbox" disabled>I2</label></div>
        <div class="row"><label><input type="checkbox" checked>U</label><i class="swatch green"></i></div>
        <div class="modes">
          <button type="button" class="on" aria-label="Сверху 1"><svg width="24" height="24"><g class="ghost"><path d="M11.500 9.500h8v9h-8z"/><text x="15" y="18">2</text></g><path d="M4.500 5.500h8v9h-8z"/><text x="9" y="14">1</text></svg></button>
          <button type="button" aria-label="Сверху 2"><svg width="24" height="24"><g class="ghost"><path d="M11.500 9.500h8v9h-8z"/><text x="16" y="18">1</text></g><path d="M4.500 5.500h8v9h-8z"/><text x="9" y="14">2</text></svg></button>
          <button type="button" aria-label="Друг под другом"><svg width="24" height="24"><path d="M7.500.5h8v9h-8zM7.500 14.500h8v9h-8z"/><path d="M2 12h20" stroke-dasharray="1 1"/><text x="12" y="9">1</text><text x="12" y="23">2</text></svg></button>
          <button type="button" aria-label="Рядом"><svg width="24" height="24"><path d="M1.500 7.500h8v9h-8zM14.500 7.500h8v9h-8z"/><path d="M12 2v20" stroke-dasharray="1 1"/><text x="6" y="16">1</text><text x="19" y="16">2</text></svg></button>
        </div>
      </fieldset>
      <fieldset class="extra"><legend>Дополнительно</legend>
        <div class="row"><label class="off"><input type="checkbox" disabled>Маска 1</label></div>
        <div class="row"><label><input type="checkbox">Маска 2</label><i class="swatch"></i></div>
        <div class="row"><label><input type="checkbox">Отверстия</label><i class="swatch"></i></div>
        <button type="button" class="setup">Установки</button>
      </fieldset>
      <fieldset class="options"><legend>Опции</legend>
        <div class="row"><label><input type="checkbox">Все черным</label></div>
        <div class="row"><label><input type="checkbox"><span><u>З</u>еркально</span></label></div>
        <div class="row"><label><input type="checkbox"><span><u>У</u>глы платы</span></label></div>
        <div class="row"><label><input type="checkbox">Контур платы</label></div>
        <div class="row"><label><input type="checkbox">Фоновый рисунок</label></div>
        <div class="row"><label><input type="checkbox">Негатив</label></div>
        <div class="row"><label><input type="checkbox" checked>Вспомог.сетка</label></div>
        <div class="row"><label><input type="checkbox" checked>Информ-строка</label></div>
      </fieldset>
      <fieldset class="radios zoom"><legend>Масштаб</legend>
        <div class="row"><label><input type="radio" name="scale" checked>1:1</label></div>
        <div class="row"><label><input type="radio" name="scale"><span><u>В</u>ыбрать</span></label><output>100%</output></div>
        <div class="hscroll"><button type="button" aria-label="Меньше" disabled></button><button type="button" aria-label="Больше" disabled></button></div>
      </fieldset>
      <fieldset class="radios orient"><legend>Ориентация</legend>
        <div class="row"><label><input type="radio" name="orient" checked>Книжная</label></div>
        <div class="row"><label><input type="radio" name="orient">Альбомная</label></div>
      </fieldset>
    </form>
    <div class="sheet">
      <div class="actions">
        <button class="w84"><svg viewBox="0 0 18 18"><path d="M1.500 1.500h15v15h-15z" fill="#fff" stroke="#000"/><path d="M9 2v14M2 9h14" stroke="#000" stroke-dasharray="1 1"/></svg><span><u>В</u> центр</span></button>
        <button class="w112"><svg class="ink" viewBox="0 0 18 18"><use href="#pages"/></svg><span>В буфер обмена</span></button>
        <button class="w82"><svg viewBox="0 0 18 18"><path d="M.5 .5h17v17H.5zM.5 9h17M6 0v18M12 0v18" fill="#fff" stroke="#999"/><g class="digits"><text x="3" y="7">1</text><text x="9" y="7">2</text><text x="15" y="7">3</text><text x="3" y="16">4</text><text x="9" y="16">5</text><text x="15" y="16">6</text></g></svg><span>Копии</span></button>
        <button class="w96"><svg viewBox="0 0 18 18"><g class="digits"><text x="3" y="5">0</text><text x="3" y="11">2</text><text x="3" y="17">3</text></g><path d="M6.500 0h4v18h-4z" fill="#fff" stroke="#000"/><path d="M7 4h2M7 8h2M7 12h2M15 4v10" stroke="#000"/><path d="M15 2l-2 3h4zM15 16l-2-3h4z"/></svg><span><u>К</u>оррекция</span></button>
        <button class="w74"><svg viewBox="0 0 18 18"><path d="M1 13l3-3h12l-2 5H3z" fill="#fff" stroke="#000"/><path d="M3 8l3-3h9" fill="none" stroke="#000" stroke-width="3"/><path d="M3 6l12-3 2 1M6 8l10-2" stroke="#1a8a8a" stroke-width="2" fill="none"/></svg><span><u>П</u>ринтер</span></button>
        <button class="w90"><svg viewBox="0 0 18 18"><use href="#printer"/></svg><span><u>П</u>ечать</span></button>
        <button class="w80"><svg viewBox="0 0 18 18"><path d="M6 0h6v2H6z" fill="#2a8a3a"/><path d="M5 4h4v13H5z" fill="#c020c0"/><path d="M9 4h4v12H9z" fill="#d8f8ff"/><path d="M1 17h3.500V3.500h9V17H17" fill="none" stroke="#101080" stroke-width="1.500"/></svg><span><u>О</u>тмена</span></button>
      </div>
      <div class="preview">
        <svg width="450" height="615" viewBox="1070 330 450 615">
          <path d="M1099 355h417v589h-417z"/>
          <path d="M1095 351h417v589h-417z" fill="#fff"/>
          <path d="M1199.500 351v588M1303.500 351v588M1408.500 351v588M1095 498.500h417M1095 645.500h417M1095 792.500h417" stroke="#b4b4b4"/>
          <path d="M1095 350.500h417M1095.500 351v579M1511.500 351v579" stroke="#a00018" stroke-dasharray="3 3"/>
          <path d="M1095.500 336v14M1195.500 336v14M1294.500 336v14M1394.500 336v14M1493.500 336v14M1115.500 347v3M1135.500 347v3M1155.500 347v3M1175.500 347v3M1215.500 347v3M1235.500 347v3M1254.500 347v3M1274.500 347v3M1314.500 347v3M1334.500 347v3M1354.500 347v3M1374.500 347v3M1413.500 347v3M1433.500 347v3M1453.500 347v3M1473.500 347v3M1080 350.500h15M1080 449.500h15M1080 549.500h15M1080 648.500h15M1080 748.500h15M1080 847.500h15" stroke="#000"/>
          <path d="M1093.500 370v579" stroke="#000" stroke-width="3" stroke-dasharray="1 18.860"/>
          <g class="scale"><text x="1097" y="346">0</text><text x="1197" y="346">50</text><text x="1296" y="346">100</text><text x="1396" y="346">150</text><text x="1495" y="346">200</text></g>
          <g class="scale" text-anchor="end"><text x="1093" y="361">0</text><text x="1093" y="460">50</text><text x="1093" y="560">100</text><text x="1093" y="659">150</text><text x="1093" y="759">200</text><text x="1093" y="858">250</text></g>
          <path d="M1095.500 930.500h416v9h-416z" fill="none" stroke="#000"/>
          <g class="info"><text x="1098" y="938">ампервольтметр.lay [Ампервольтметр] - 100 %</text><text x="1510" y="938" text-anchor="end">17.08.2020 12:52:04</text></g>
          <svg class="mini" x="1095" y="350" width="137" height="104" viewBox="369 288 1968 1485"><use href="#board"/></svg>
        </svg>
        <button class="help">?</button>
      </div>
    </div>
  </div>
  <svg class="pointer" width="104" height="38"><path d="M0 19L37 0v15h67v9H37v14z"/></svg>
</section>
</body>
</html>
```
FILE: styles.css
```css
:root {
  --face: #f0f0f0;
  --line: #a0a0a0;
  --ui: Roboto, "Noto Sans", sans-serif;
  --small: "DejaVu Sans Condensed", "DejaVu Sans", sans-serif;
}
* { box-sizing: border-box; }
html, body { height: 100%; }
body {
  margin: 0;
  display: flex;
  flex-direction: column;
  position: relative;
  overflow: hidden;
  background: var(--face);
  font: 11px/14px var(--small);
  color: #111;
}
button { font: inherit; color: inherit; padding: 0; border: 0; background: none; }
.defs { position: absolute; }
.i16 { width: 16px; height: 16px; }

/* title bar and menu */
.titlebar { display: flex; align-items: center; gap: 5px; height: 23px; padding-left: 2px; background: #fff; color: #999; font: 12px/16px var(--ui); }
.winbtns { display: flex; margin-left: auto; }
.winbtns button { width: 46px; height: 22px; display: grid; place-items: center; }
.menubar { display: flex; gap: 14px; height: 20px; padding: 2px 7px; background: #fff; font: 12px/16px var(--ui); }
.menubar a { color: #666; text-decoration: none; }

/* toolbar */
.toolbar { display: flex; justify-content: space-between; height: 30px; border: solid var(--line); border-width: 1px 0; background: #f0f0f0; }
.bargroup { display: flex; align-items: center; background: linear-gradient(#fff, #f4f4f4 40%, #dcdcdc); }
.bargroup button { width: 27px; height: 28px; display: grid; place-items: center; }
.bargroup svg { width: 18px; height: 18px; }
.macrotools svg { width: 20px; height: 20px; }
.sep { width: 8px; height: 28px; background: linear-gradient(#999, #999) 3px 0 / 1px 100% no-repeat; }
.dim { color: #8c8c8c; }
.bargroup .x2 { width: 28px; font: bold 14px/18px "Liberation Sans", sans-serif; }
.bargroup .drop { width: 12px; }
.caret { border: 4px solid transparent; border-top-color: #333; border-bottom: 0; }
.caret.blue { border-top-color: #1414c8; }
.badge { font: bold 9px "Liberation Mono", monospace; text-anchor: middle; }

/* work area */
.body { flex: 1; display: flex; min-height: 0; }
.tools { width: 97px; padding: 4px 2px 0; }
.toollist { display: grid; gap: 2px; padding-bottom: 9px; border-bottom: 1px solid var(--line); }
.toollist button { display: flex; align-items: center; gap: 4px; height: 24px; padding: 0 5px 0 2px; border: 1px solid transparent; color: #10107c; font: 11px/16px "Liberation Sans", sans-serif; }
.toollist .on { background: #c0dcf3; border-color: #90c8f6; color: #8c1030; }
.toollist svg { width: 18px; height: 18px; flex: none; }
.toollist .caret { margin-left: auto; }
.abl { width: 18px; color: #000; font: bold 12px/16px var(--small); }
.grid { display: flex; align-items: center; gap: 4px; width: 100%; height: 36px; padding-left: 4px; border-bottom: 1px solid var(--line); }
.grid svg { width: 20px; height: 20px; }
.sizes { display: grid; gap: 8px; padding: 14px 4px 0; }
.size { display: flex; align-items: center; gap: 4px; }
.size > svg { flex: none; }
.size .caret { margin: 0 2px; }
.size div { display: grid; gap: 2px; }
.size input { width: 36px; height: 14px; padding: 0 2px; border: 0; background: #000; color: #ffff50; font: 11px/14px "DejaVu Sans", sans-serif; text-align: right; }
.spin i { width: 5px; height: 10px; margin: 2px 0; border: solid #444; border-width: 0 2px; border-radius: 3px; }
.swap { justify-self: end; margin-right: 21px; height: 8px; line-height: 0; }

.work { flex: 1; display: flex; flex-direction: column; min-width: 0; border-left: 1px solid var(--line); }
.ruler-x { width: 100%; height: 22px; display: block; flex: none; }
.ruler-x text, .ruler-y text { font: 11px "Liberation Sans", sans-serif; }
.stage { flex: 1; display: flex; min-height: 0; }
.ruler-y { width: 24px; height: 100%; flex: none; }
.canvas { flex: 1; background: #fff; border: solid #808080; border-width: 1px 1px 0 1px; overflow: hidden; }
.canvas svg { display: block; }
.tabs { display: flex; height: 23px; padding-top: 3px; background: #f6f6f6; }
.tabs .lead { width: 8px; border-top: 1px solid #555; }
.tabs .rest { flex: 1; border-top: 1px solid #555; }
.tabs button { height: 17px; border-bottom: 1px solid #555; }

/* circuit board */
.pcb { --copper: #00b800; --hole: #000; --silk: #d01414; --silk-w: 3; --bold-w: 5; --under: #d8d83c; --under-w: 3; --name: #fff; --name-w: 0; }
.mini { --copper: #000; --hole: #fff; --silk: #e01010; --silk-w: 12; --bold-w: 14; --under: #e01010; --under-w: 12; --name: #00e400; --name-w: 14; }
.copper { fill: var(--copper); stroke: none; }
.hole { fill: var(--hole); }
.track path { fill: none; stroke: var(--copper); stroke-width: 28; stroke-linecap: round; stroke-linejoin: round; }
.track .copper { fill: var(--copper); stroke: none; }
.track .w42 { stroke-width: 42; }
.track .w56 { stroke-width: 56; }
.track .w70 { stroke-width: 72; }
.track .w86 { stroke-width: 86; }
.drill { fill: none; stroke: var(--hole); stroke-width: 28; stroke-linecap: round; }
.drill .wide { stroke-width: 42; }
.silk { fill: none; stroke: var(--silk); stroke-width: var(--silk-w); }
.silk .bold { stroke-width: var(--bold-w); }
.under { fill: none; stroke: var(--under); stroke-width: var(--under-w); }
.under text { font: bold 16px "Liberation Sans", sans-serif; fill: #ffff20; stroke: none; text-anchor: middle; }
.names text { font: 42px "Roboto Condensed", "Liberation Sans", sans-serif; fill: var(--name); stroke: var(--name); stroke-width: var(--name-w); text-anchor: middle; }

/* macro panel */
.macros { width: 185px; padding: 2px 0 0 6px; display: flex; flex-direction: column; background: radial-gradient(circle at 1px 1px, #999 1px, transparent 1px) 1px 0 / 4px 4px, var(--face); border-left: 3px solid var(--face); }
.macros header { display: flex; height: 18px; background: #000; color: #ff6060; }
.macros h2 { flex: 1; margin: 0; text-align: center; font: bold 13px/18px "Liberation Sans", sans-serif; }
.macros header button { width: 16px; height: 16px; margin: 1px; background: #f0f0f0; color: #000; font-size: 12px; }
.tree { flex: none; height: 592px; margin: 2px 0 6px; padding: 1px 8px; border: 1px solid #888; background: #fff; list-style: none; }
.tree li { display: flex; align-items: center; gap: 6px; height: 16px; }
.tree button { width: 9px; height: 9px; border: 1px solid #8aa; background: #fff; color: #224; font: 9px/7px "DejaVu Sans", sans-serif; }
.macrobar { height: 42px; background: var(--face); padding: 1px 2px; }
label { display: flex; align-items: center; gap: 2px; }
.icons { display: flex; align-items: center; gap: 5px; margin-top: 5px; }
.icons button { height: 18px; line-height: 18px; color: #000; }
.icons svg { width: 18px; height: 18px; display: block; }
.icons .gap { flex: 1; }
.icons .view { color: #223; padding-right: 2px; }
.navy { --disk: #1414a0; }
.nameplate { height: 31px; border: solid var(--line); border-width: 1px 0 1px 1px; background: #e9e9e9; }
.macroview { flex: 1; margin-bottom: 1px; padding: 2px 4px; display: flex; align-items: flex-end; justify-content: flex-end; background: #000; color: #eee; }

/* form controls */
input[type=checkbox], input[type=radio] { appearance: none; width: 13px; height: 13px; margin: 0; border: 1px solid #333; background: #fff; position: relative; flex: none; }
input[type=radio] { border-radius: 50%; }
input[type=checkbox]:checked::after { content: ""; position: absolute; left: 3px; top: 0; width: 4px; height: 8px; border: solid #333; border-width: 0 1px 1px 0; transform: rotate(40deg); }
input[type=radio]:checked::after { content: ""; position: absolute; inset: 2px; border-radius: 50%; background: #222; }
input:disabled { border-color: #ccc; }
.off { color: #888; }

/* status bar */
.status { display: flex; gap: 4px; height: 38px; padding-left: 3px; border-bottom: 2px solid #444; }
.status > * { border: solid var(--line); border-width: 1px 0 0 1px; }
.coords { display: grid; grid-template-columns: auto 1fr; align-content: center; width: 83px; margin: 0; padding: 0 4px; line-height: 15px; }
.coords dd { margin: 0; text-align: right; }
.layerbox { display: flex; align-items: center; width: 184px; }
.layerbox table { border-collapse: collapse; height: 35px; }
.layerbox th { width: 47px; padding: 0; font-weight: normal; }
.layerbox td { width: 24px; padding: 0; height: 17px; text-align: center; border-left: 1px solid var(--line); }
.layerbox td input { display: block; margin: 0 auto; }
.names-row td { background: #000; border: 0; font: bold 12px/18px "DejaVu Sans Condensed", sans-serif; }
.layerbox .k1 { color: #3070f0; } .layerbox .b1 { color: #e02020; } .layerbox .k2 { color: #10a820; } .layerbox .b2 { color: #e8e020; } .layerbox .u { color: #fff; }
.layerbox button { flex: 1; }
.big { width: 37px; display: grid; place-items: center; }
.message { flex: 1; padding: 0 4px; display: flex; align-items: center; }
.message hr { flex: 1; border: 0; border-top: 1px solid var(--line); margin: 0; }

/* print dialog */
.dialog { position: absolute; left: 821px; top: 257px; width: 808px; height: 700px; display: flex; flex-direction: column; border: 1px solid #666; background: var(--face); box-shadow: 2px 3px 12px rgba(0, 0, 0, .35); }
.dialog header { display: flex; align-items: center; gap: 5px; height: 30px; padding-left: 8px; background: #fff; }
.dialog h1 { margin: 0; font: 12px/16px var(--ui); color: #000; }
.dlgbody { flex: 1; display: flex; padding: 3px 6px 7px; }
.settings { width: 137px; display: flex; flex-direction: column; gap: 15px; }
fieldset { margin: 0; padding: 5px 9px 0; min-width: 0; border: 1px solid #d8d8d8; }
legend { height: 14px; margin-left: -4px; padding: 0 1px; line-height: 16px; }
.row { display: flex; align-items: center; justify-content: space-between; height: 16px; }
.layers { height: 178px; }
.extra { height: 104px; }
.options { height: 178px; padding-top: 7px; }
.options .row { height: 18px; }
.zoom { height: 80px; }
.orient { height: 57px; }
.radios { padding-left: 5px; padding-right: 7px; }
.radios label { gap: 3px; }
.radios legend { margin-left: 0; }
.radios output { color: #999; }
.swatch { width: 13px; height: 13px; margin-right: 1px; background: #000; }
.swatch.red { background: #f00; }
.swatch.green { background: #0f0; }
.modes { display: flex; gap: 1px; margin: 13px -1px 0; }
.modes button { width: 29px; height: 27px; display: grid; place-items: center; flex: none; border: 1px solid #bbb; background: #e1e1e1; }
.modes .on { border-color: #0a5a9c; background: #cce4f7; }
.modes path { fill: #fff; stroke: #000; }
.modes text { font: bold 9px "DejaVu Sans", sans-serif; text-anchor: middle; }
.modes .ghost path { stroke: #999; fill: #eee; }
.modes .ghost text { fill: #999; }
.setup { display: block; width: 115px; height: 22px; margin: 7px auto 0; border: 1px solid #adadad; background: #e1e1e1; }
.hscroll { display: flex; justify-content: space-between; align-items: center; height: 19px; margin-top: 3px; padding: 0 6px; border: solid; border-width: 1px; border-color: #999 #fff #fff #999; }
.hscroll button { width: 6px; height: 6px; border: solid #aaa; border-width: 0 0 2px 2px; transform: rotate(45deg); }
.hscroll button + button { transform: rotate(225deg); }
.sheet { flex: 1; display: flex; flex-direction: column; padding-left: 10px; }
.actions { display: flex; gap: 2px; padding: 6px 0 7px 2px; }
.actions button { display: flex; align-items: center; gap: 4px; height: 25px; padding-left: 6px; border: 1px solid #adadad; background: #e1e1e1; white-space: nowrap; }
.actions .w112, .actions .w82 { padding-left: 4px; }
.actions svg { width: 18px; height: 18px; flex: none; }
.w84 { width: 84px; } .w112 { width: 112px; } .w82 { width: 82px; } .w96 { width: 96px; } .w74 { width: 74px; } .w90 { width: 90px; } .w80 { width: 80px; }
.ink { color: #101050; }
.digits text { font: bold 7px "DejaVu Sans", sans-serif; fill: #2020a0; text-anchor: middle; }
.preview { flex: 1; display: flex; justify-content: space-between; padding: 0 0 0 94px; border: solid; border-width: 1px; border-color: #909090 #fff #fff #909090; }
.scale text { font: 9px "Liberation Sans", sans-serif; }
.info text { font: 7px "Liberation Sans", sans-serif; fill: #333; }
.help { width: 16px; height: 16px; border: 1px solid #adadad; background: #e1e1e1; font-weight: bold; }
.pointer { position: absolute; left: 133px; top: 70px; }
```
